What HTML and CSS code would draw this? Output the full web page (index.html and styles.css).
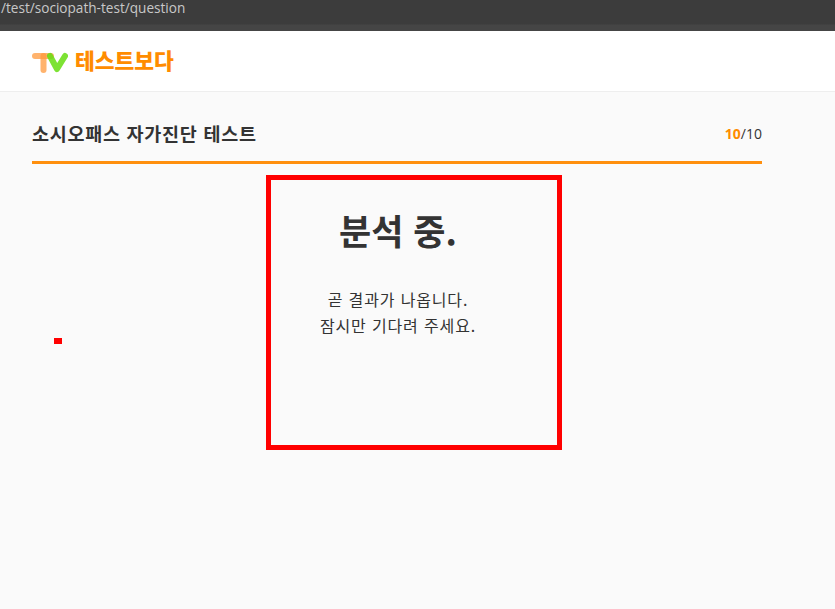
FILE: index.html
```html
<!DOCTYPE html>
<html lang="ko">
<head>
<meta charset="utf-8">
<title>소시오패스 자가진단 테스트</title>
<link rel="stylesheet" href="styles.css">
</head>
<body>
<div class="urlbar"><span class="url">/test/sociopath-test/question</span></div>
<header class="site-header">
  <a class="logo">
    <svg class="logo-mark" width="36" height="24" viewBox="0 0 36 24">
      <path d="M3 5H19" class="t-stroke"/>
      <path d="M11.500 5V19" class="t-stroke"/>
      <path d="M18 5L25 18L33 5" class="v-stroke"/>
    </svg>
    <span class="logo-text">테스트보다</span>
  </a>
</header>
<main class="content">
  <div class="title-row">
    <h2 class="test-title">소시오패스 자가진단 테스트</h2>
    <div class="progress"><b>10</b>/10</div>
  </div>
  <section class="analysis">
    <h1 class="analysis-title">분석 중.</h1>
    <p class="analysis-text">곧 결과가 나옵니다.<br>잠시만 기다려 주세요.</p>
  </section>
</main>
<div class="mark-box"></div>
<div class="mark-dot"></div>
</body>
</html>
```
FILE: styles.css
```css
* { box-sizing: border-box; }
html, body { height: 100%; }
body {
  margin: 0;
  background: #fafafa;
  color: #333;
  font-family: "Noto Sans CJK KR", "Open Sans", sans-serif;
  overflow: hidden;
  position: relative;
}
.urlbar {
  height: 31px;
  padding-left: 1px;
  background: linear-gradient(#3c3c3c 0, #3c3c3c 24px, #454545 25px, #454545 100%);
}
.url {
  display: block;
  font-family: "Open Sans", sans-serif;
  font-size: 13.600px;
  line-height: 15px;
  color: #c8c8c8;
}
.site-header {
  height: 61px;
  background: #fff;
  border-bottom: 1px solid #eee;
  padding-left: 32px;
  display: flex;
  align-items: center;
}
.logo { display: flex; align-items: center; gap: 7px; }
.logo-mark { display: block; margin-top: 3px; }
.t-stroke { fill: none; stroke: #ff9a3c; stroke-opacity: .75; stroke-width: 6; stroke-linecap: round; }
.v-stroke { fill: none; stroke: #66dd11; stroke-opacity: .85; stroke-width: 6; stroke-linecap: round; stroke-linejoin: round; }
.logo-text {
  font-size: 21.500px;
  font-weight: 900;
  color: #ff8c00;
  line-height: 24px;
  margin-top: -3px;
}
.content { width: 730px; margin-left: 32px; }
.title-row {
  height: 72px;
  border-bottom: 3px solid #ff8f0d;
  display: flex;
  justify-content: space-between;
  align-items: center;
  padding-top: 25px;
  padding-bottom: 12px;
}
.test-title { margin: 0; font-size: 18.500px; letter-spacing: .72px; font-weight: 700; line-height: 26px; color: #333; }
.progress { font-family: "Open Sans", sans-serif; font-size: 14px; color: #333; }
.progress b { color: #ff8c00; }
.analysis { text-align: center; padding-top: 41px; padding-left: 2px; }
.analysis-title { margin: 0; font-size: 35px; font-weight: 700; line-height: 50px; color: #333; }
.analysis-text { margin: 31px 0 0; font-size: 16px; letter-spacing: .85px; line-height: 26px; color: #333; }
.mark-box {
  position: absolute;
  left: 266px;
  top: 175px;
  width: 296px;
  height: 275px;
  border: 5px solid #f00;
}
.mark-dot {
  position: absolute;
  left: 54px;
  top: 338px;
  width: 8px;
  height: 6px;
  background: #f00;
}
```
